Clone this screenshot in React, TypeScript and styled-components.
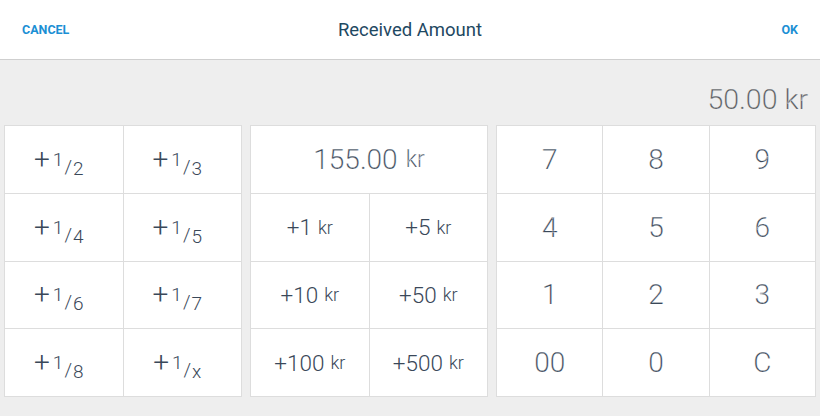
import React from 'react';
import styled, { createGlobalStyle } from 'styled-components';

const GlobalStyle = createGlobalStyle`
  * {
    box-sizing: border-box;
    margin: 0;
    padding: 0;
  }

  body {
    font-family: Roboto, 'Liberation Sans', sans-serif;
    background: #eeeeee;
    width: 820px;
    height: 416px;
    overflow: hidden;
  }
`;

const Screen = styled.div`
  display: flex;
  flex-direction: column;
  height: 416px;
  background: #eeeeee;
`;

const Header = styled.header`
  height: 60px;
  background: #ffffff;
  border-bottom: 1px solid #cfcfcf;
  display: flex;
  align-items: center;
  justify-content: space-between;
  padding: 0 22px;
`;

const HeaderAction = styled.button<{ align: 'left' | 'right' }>`
  border: none;
  background: none;
  font-family: inherit;
  font-size: 12.5px;
  font-weight: 700;
  color: #1b8fd4;
  width: 54px;
  text-align: ${(p) => p.align};
  cursor: pointer;
`;

const Title = styled.h1`
  font-size: 18.5px;
  font-weight: 400;
  color: #1e4862;
`;

const Body = styled.main`
  flex: 1;
  padding: 0 4px;
  display: flex;
  flex-direction: column;
`;

const AmountRow = styled.div`
  height: 65px;
  display: flex;
  align-items: flex-end;
  justify-content: flex-end;
  padding: 0 8px 11px 0;
`;

const Amount = styled.div`
  font-size: 28.5px;
  line-height: 1;
  font-weight: 300;
  color: #54585c;
  -webkit-text-stroke: 0.25px #eeeeee;
`;

const Panels = styled.div`
  display: grid;
  grid-template-columns: 238px 238px 320px;
  gap: 8px;
  height: 272px;
`;

const Panel = styled.div<{ cols: number }>`
  display: grid;
  grid-template-columns: repeat(${(p) => p.cols}, 1fr);
  grid-template-rows: repeat(4, 1fr);
  gap: 1px;
  padding: 1px;
  background: #dddddd;
`;

const Cell = styled.button<{ big?: boolean; span?: number }>`
  grid-column: span ${(p) => p.span || 1};
  border: none;
  background: #ffffff;
  display: flex;
  align-items: center;
  justify-content: center;
  font-family: inherit;
  font-weight: 300;
  font-size: ${(p) => (p.big ? '28px' : '22.5px')};
  color: #3a4859;
  -webkit-text-stroke: ${(p) => (p.big ? '0.25px #ffffff' : '0')};
  cursor: pointer;
  white-space: nowrap;
`;

const Unit = styled.span<{ size: number }>`
  font-size: ${(p) => p.size}px;
  margin-left: ${(p) => Math.round(p.size / 3)}px;
`;

const Fraction = styled.span`
  display: inline-flex;
  align-items: baseline;
  font-size: 28px;
  margin-right: 10px;
`;

const Numerator = styled.span`
  font-size: 19px;
  margin-left: 3px;
  position: relative;
  top: -3px;
`;

const Slash = styled.span`
  font-size: 19px;
  position: relative;
  top: 4px;
  margin: 0 1px;
`;

const Denominator = styled.span`
  font-size: 19px;
  position: relative;
  top: 6px;
`;

const fractions = ['2', '3', '4', '5', '6', '7', '8', 'x'];
const quick = [1, 5, 10, 50, 100, 500];
const keys = ['7', '8', '9', '4', '5', '6', '1', '2', '3', '00', '0', 'C'];

const App: React.FC = () => {
  return (
    <>
      <GlobalStyle />
      <Screen>
        <Header>
          <HeaderAction align="left">CANCEL</HeaderAction>
          <Title>Received Amount</Title>
          <HeaderAction align="right">OK</HeaderAction>
        </Header>
        <Body>
          <AmountRow>
            <Amount>50.00 kr</Amount>
          </AmountRow>
          <Panels>
            <Panel cols={2}>
              {fractions.map((d) => (
                <Cell key={d}>
                  <Fraction>
                    +<Numerator>1</Numerator>
                    <Slash>/</Slash>
                    <Denominator>{d}</Denominator>
                  </Fraction>
                </Cell>
              ))}
            </Panel>
            <Panel cols={2}>
              <Cell big span={2}>
                155.00<Unit size={23}>kr</Unit>
              </Cell>
              {quick.map((q) => (
                <Cell key={q}>
                  +{q}
                  <Unit size={18}>kr</Unit>
                </Cell>
              ))}
            </Panel>
            <Panel cols={3}>
              {keys.map((k) => (
                <Cell big key={k}>
                  {k}
                </Cell>
              ))}
            </Panel>
          </Panels>
        </Body>
      </Screen>
    </>
  );
};

export default App;
